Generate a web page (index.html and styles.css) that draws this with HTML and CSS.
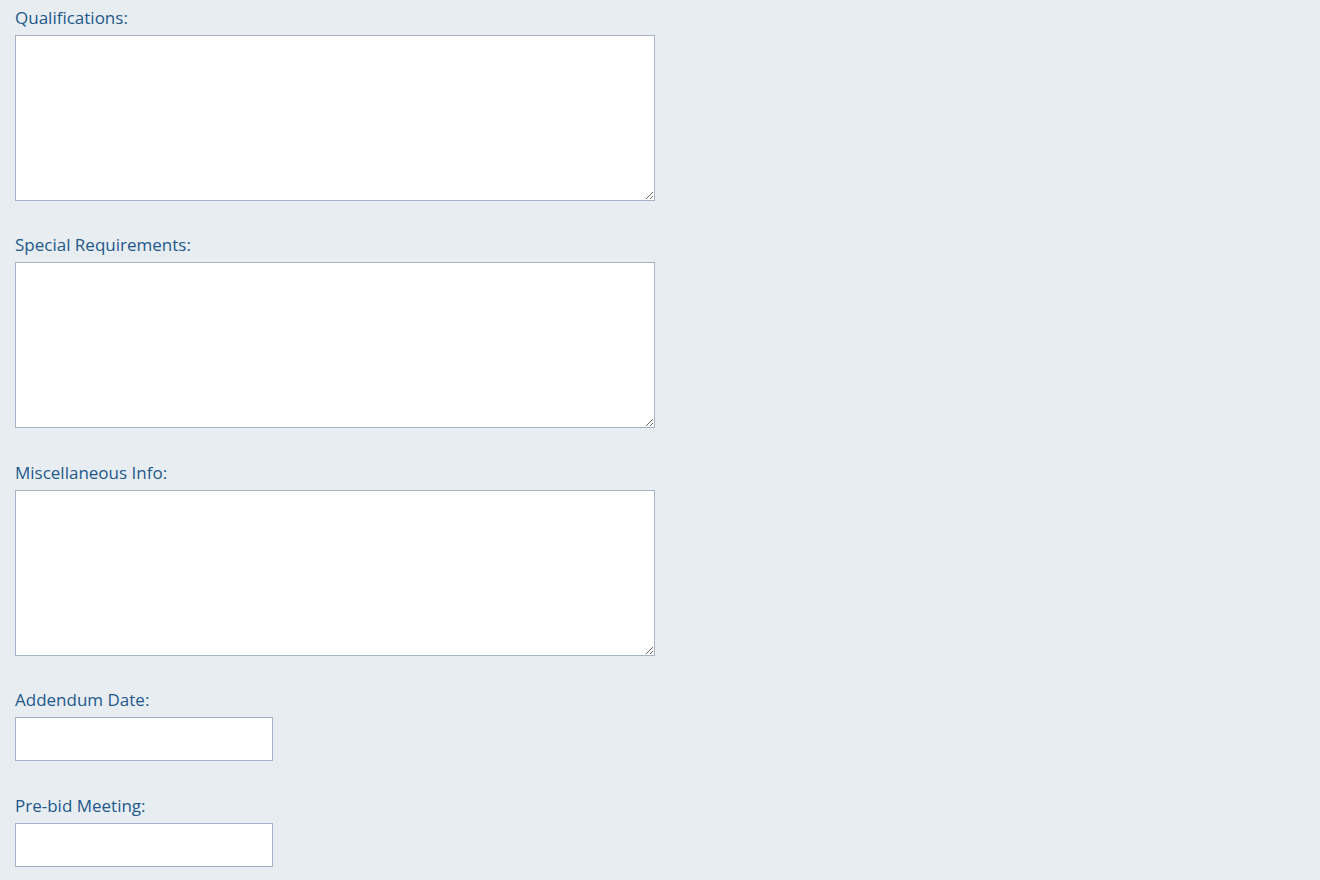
FILE: index.html
```html
<!DOCTYPE html>
<html lang="en">
<head>
    <meta charset="UTF-8">
    <meta name="viewport" content="width=device-width, initial-scale=1.0">
    <title>Bid Details</title>
    <link rel="stylesheet" href="styles.css">
</head>
<body>
    <form class="bid-form">
        <div class="field">
            <label for="qualifications">Qualifications:</label>
            <textarea id="qualifications"></textarea>
        </div>
        <div class="field">
            <label for="special-requirements">Special Requirements:</label>
            <textarea id="special-requirements"></textarea>
        </div>
        <div class="field">
            <label for="misc-info">Miscellaneous Info:</label>
            <textarea id="misc-info"></textarea>
        </div>
        <div class="field">
            <label for="addendum-date">Addendum Date:</label>
            <input type="text" id="addendum-date" />
        </div>
        <div class="field">
            <label for="prebid-meeting">Pre-bid Meeting:</label>
            <input type="text" id="prebid-meeting" />
        </div>
    </form>
</body>
</html>
```

FILE: styles.css
```css
body {
    margin: 0;
    font-family: "Open Sans", "Noto Sans", sans-serif;
    background-color: #e8edf2;
    color: #22598a;
}
.bid-form {
    padding: 5px 15px 0;
}
.field {
    margin-bottom: 31.45px;
}
.field label {
    display: block;
    font-size: 17px;
    line-height: 26px;
    margin-bottom: 4px;
}
textarea, input {
    display: block;
    box-sizing: border-box;
    margin: 0;
    border: 1px solid #a6b3c3;
    border-radius: 0;
    background-color: #ffffff;
    font-family: inherit;
    font-size: 14px;
}
textarea {
    width: 640px;
    height: 166px;
}
input {
    width: 258px;
    height: 44px;
}
```
